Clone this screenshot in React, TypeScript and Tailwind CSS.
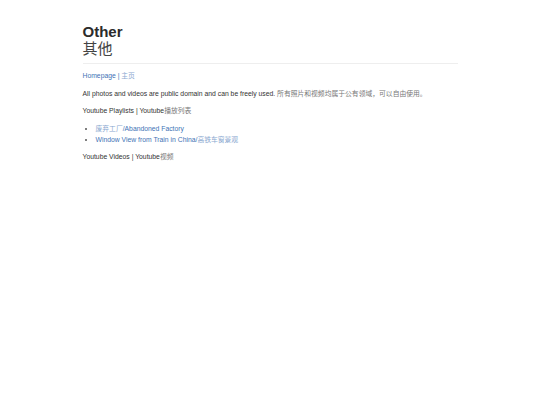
export default function App() {
  const font = { fontFamily: '"Liberation Sans", Arial, "Noto Sans CJK SC", sans-serif' };
  return (
    <div className="min-h-[405px] bg-white text-[#333]" style={font}>
      <div className="mx-auto w-[375px] pt-[24px]">
        <h1 className="text-[15px] font-bold leading-[16px] text-[#2b2b2b]">Other</h1>
        <div className="text-[15px] leading-[18px] text-[#444]">其他</div>
        <hr className="mt-[5px] border-t border-[#eee]" />
        <div className="mt-[6px] text-[6.8px] leading-[11px]">
          <a className="text-[#4173b5]">Homepage</a>
          <span className="text-[#4173b5]"> | </span>
          <a className="text-[#8aa8d0]">主页</a>
        </div>
        <p className="mt-[7px] text-[6.8px] leading-[11px]">
          All photos and videos are public domain and can be freely used.{" "}
          <span className="text-[#777]">所有照片和视频均属于公有领域，可以自由使用。</span>
        </p>
        <p className="mt-[6px] text-[6.8px] leading-[11px]">
          Youtube Playlists | Youtube<span className="text-[#777]">播放列表</span>
        </p>
        <ul className="mt-[7px] list-disc pl-[13px] text-[6.8px] leading-[11px] marker:text-[#555]">
          <li>
            <a className="text-[#4173b5]">
              <span className="text-[#8aa8d0]">废弃工厂</span>/Abandoned Factory
            </a>
          </li>
          <li>
            <a className="text-[#4173b5]">
              Window View from Train in China/<span className="text-[#8aa8d0]">高铁车窗景观</span>
            </a>
          </li>
        </ul>
        <p className="mt-[6px] text-[6.8px] leading-[11px]">
          Youtube Videos | Youtube<span className="text-[#777]">视频</span>
        </p>
      </div>
    </div>
  );
}
